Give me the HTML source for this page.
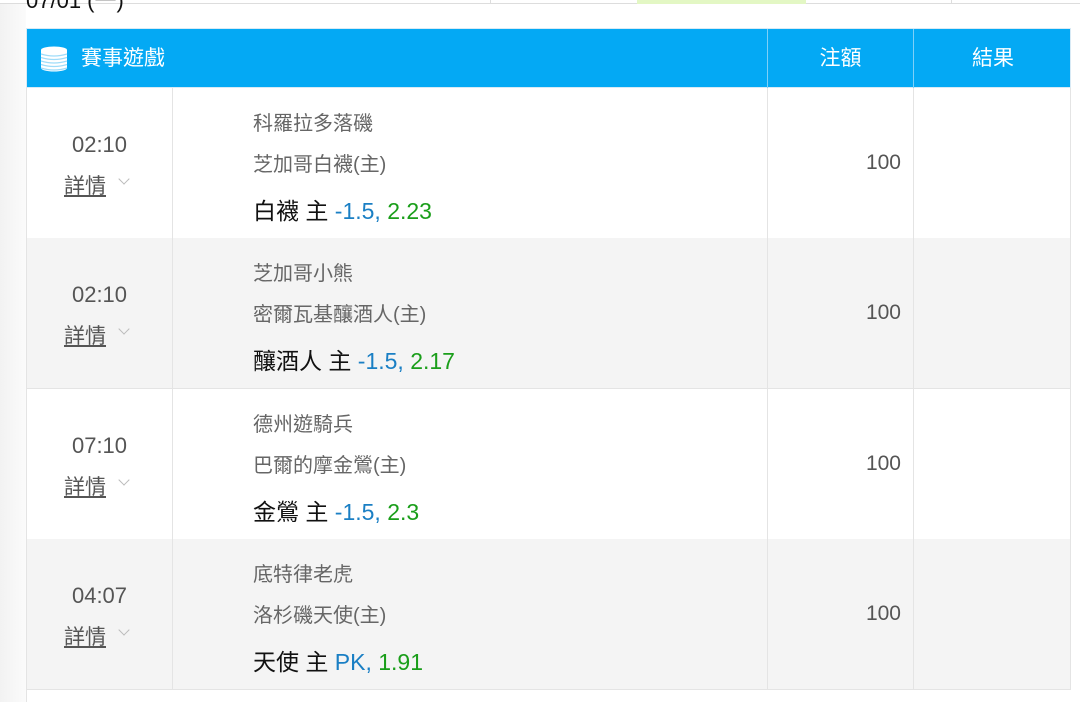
<!DOCTYPE html>
<html><head><meta charset="utf-8"><style>
*{margin:0;padding:0;box-sizing:border-box}
body{width:1080px;height:702px;overflow:hidden;background:#fff;position:relative;font-family:"Liberation Sans","Noto Sans CJK TC",sans-serif;}
.abs{position:absolute}
.leftbar{left:0;top:0;width:26px;height:702px;background:linear-gradient(to right,#f2f2f2,#fbfbfb)}
.hdr{left:26px;top:28px;width:1045px;height:60px;background:#04a9f4;border:1px solid #d8eaf5}
.hdr .t{position:absolute;top:0;line-height:60px;color:#fff;font-size:21px}
.vl{position:absolute;top:0;width:1px;height:60px;background:#7fd0f8}
.row{position:absolute;left:26px;width:1045px;height:151px;border:1px solid #e4e4e4;border-top:none}
.row .c{position:absolute;top:0;height:150px;width:1px;background:#e4e4e4}
.time{position:absolute;left:0;width:145px;text-align:center;top:44px;font-size:22px;color:#555}
.det{position:absolute;left:37px;top:82px;font-size:21px;color:#555;text-decoration:underline}
.chev{position:absolute;left:93px;top:87px;width:8px;height:8px;border-right:1.5px solid #bbb;border-bottom:1.5px solid #bbb;transform:rotate(45deg)}
.l1,.l2{position:absolute;left:226px;font-size:20px;color:#666}
.l1{top:19px}.l2{top:60px}
.l3{position:absolute;left:226px;top:104px;font-size:23px;color:#111}
.b{color:#1a7fc4}.g{color:#1a9e1a}
.amt{position:absolute;left:741px;width:133px;text-align:right;top:63px;font-size:21px;color:#555}
</style></head><body>
<div class="abs leftbar"></div>
<div class="abs" style="left:0;top:0;width:1080px;height:4px;border-bottom:1px solid #ddd;background:#fff"></div>
<div class="abs" style="left:490px;top:0;width:1px;height:4px;background:#ddd"></div>
<div class="abs" style="left:637px;top:0;width:169px;height:4px;background:#e3f7c4"></div>
<div class="abs" style="left:951px;top:0;width:1px;height:4px;background:#ddd"></div>
<div class="abs" style="left:26px;top:-12px;font-size:22px;color:#111;line-height:26px">07/01 (一)</div>
<div class="abs hdr">
 <svg style="position:absolute;left:13px;top:17px" width="28" height="26" viewBox="0 0 28 26">
  <g fill="#fff"><ellipse cx="14" cy="4" rx="13" ry="3.5"/><rect x="1" y="4" width="26" height="18"/><ellipse cx="14" cy="22" rx="13" ry="3.5"/></g>
  <g stroke="#9fdcf9" stroke-width="1.2" fill="none"><path d="M1 8q13 4 26 0M1 11.5q13 4 26 0M1 15q13 4 26 0M1 18.5q13 4 26 0M1 22q13 4 26 0"/></g>
 </svg>
 <div class="t" style="left:54px">賽事遊戲</div>
 <div class="vl" style="left:740px"></div>
 <div class="vl" style="left:886px"></div>
 <div class="t" style="left:741px;width:145px;text-align:center">注額</div>
 <div class="t" style="left:887px;width:158px;text-align:center">結果</div>
</div>

<div class="row" style="top:88px;background:#fff">
 <div class="c" style="left:145px"></div><div class="c" style="left:740px"></div><div class="c" style="left:886px"></div>
 <div class="time">02:10</div><div class="det">詳情</div><div class="chev"></div>
 <div class="l1">科羅拉多落磯</div><div class="l2">芝加哥白襪(主)</div>
 <div class="l3">白襪 主 <span class="b">-1.5,</span> <span class="g">2.23</span></div>
 <div class="amt">100</div>
</div>
<div class="row" style="top:238px;background:#f4f4f4">
 <div class="c" style="left:145px"></div><div class="c" style="left:740px"></div><div class="c" style="left:886px"></div>
 <div class="time">02:10</div><div class="det">詳情</div><div class="chev"></div>
 <div class="l1">芝加哥小熊</div><div class="l2">密爾瓦基釀酒人(主)</div>
 <div class="l3">釀酒人 主 <span class="b">-1.5,</span> <span class="g">2.17</span></div>
 <div class="amt">100</div>
</div>
<div class="row" style="top:389px;background:#fff">
 <div class="c" style="left:145px"></div><div class="c" style="left:740px"></div><div class="c" style="left:886px"></div>
 <div class="time">07:10</div><div class="det">詳情</div><div class="chev"></div>
 <div class="l1">德州遊騎兵</div><div class="l2">巴爾的摩金鶯(主)</div>
 <div class="l3">金鶯 主 <span class="b">-1.5,</span> <span class="g">2.3</span></div>
 <div class="amt">100</div>
</div>
<div class="row" style="top:539px;background:#f4f4f4">
 <div class="c" style="left:145px"></div><div class="c" style="left:740px"></div><div class="c" style="left:886px"></div>
 <div class="time">04:07</div><div class="det">詳情</div><div class="chev"></div>
 <div class="l1">底特律老虎</div><div class="l2">洛杉磯天使(主)</div>
 <div class="l3">天使 主 <span class="b">PK,</span> <span class="g">1.91</span></div>
 <div class="amt">100</div>
</div>
<div class="abs" style="left:26px;top:690px;width:1px;height:12px;background:#e4e4e4"></div>
</body></html>
